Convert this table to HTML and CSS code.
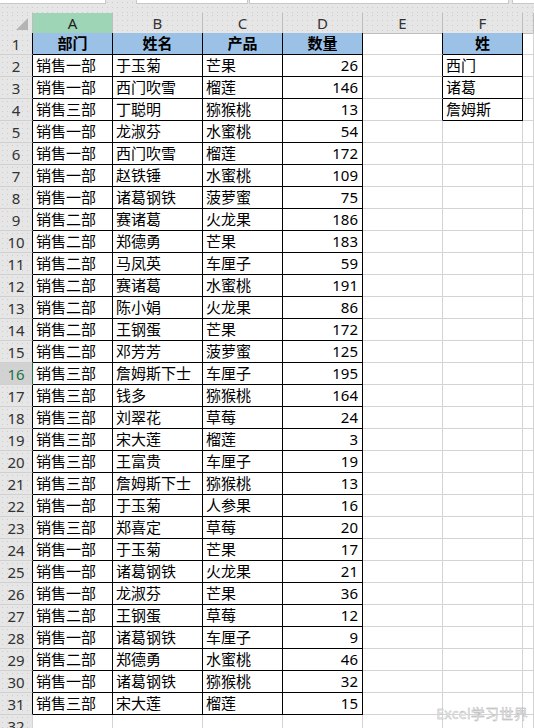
FILE: index.html
```html
<!DOCTYPE html>
<html lang="zh">
<head>
<meta charset="utf-8">
<title>Sheet</title>
<link rel="stylesheet" href="styles.css">
</head>
<body>
<div class="sheet">
  <div class="topbar">
    <div class="box b1"></div>
    <div class="box b2"></div>
    <div class="box b3"></div>
    <div class="box b4"></div>
  </div>

  <div class="row colhead">
    <div class="corner"><span class="tri"></span></div>
    <div class="ch sel tb">A</div>
    <div class="ch tb">B</div>
    <div class="ch tb">C</div>
    <div class="ch tb">D</div>
    <div class="ch">E</div>
    <div class="ch tb">F</div>
    <div class="ch"></div>
  </div>

  <div class="row"><div class="rh">1</div><div class="c tb h">部门</div><div class="c tb h">姓名</div><div class="c tb h">产品</div><div class="c tb h">数量</div><div class="c rb"></div><div class="c tb h">姓</div><div class="c"></div></div>
  <div class="row"><div class="rh">2</div><div class="c tb">销售一部</div><div class="c tb">于玉菊</div><div class="c tb">芒果</div><div class="c tb n">26</div><div class="c rb"></div><div class="c tb">西门</div><div class="c"></div></div>
  <div class="row"><div class="rh">3</div><div class="c tb">销售一部</div><div class="c tb">西门吹雪</div><div class="c tb">榴莲</div><div class="c tb n">146</div><div class="c rb"></div><div class="c tb">诸葛</div><div class="c"></div></div>
  <div class="row"><div class="rh">4</div><div class="c tb">销售三部</div><div class="c tb">丁聪明</div><div class="c tb">猕猴桃</div><div class="c tb n">13</div><div class="c rb"></div><div class="c tb">詹姆斯</div><div class="c"></div></div>
  <div class="row"><div class="rh">5</div><div class="c tb">销售一部</div><div class="c tb">龙淑芬</div><div class="c tb">水蜜桃</div><div class="c tb n">54</div><div class="c"></div><div class="c"></div><div class="c"></div></div>
  <div class="row"><div class="rh">6</div><div class="c tb">销售一部</div><div class="c tb">西门吹雪</div><div class="c tb">榴莲</div><div class="c tb n">172</div><div class="c"></div><div class="c"></div><div class="c"></div></div>
  <div class="row"><div class="rh">7</div><div class="c tb">销售一部</div><div class="c tb">赵铁锤</div><div class="c tb">水蜜桃</div><div class="c tb n">109</div><div class="c"></div><div class="c"></div><div class="c"></div></div>
  <div class="row"><div class="rh">8</div><div class="c tb">销售一部</div><div class="c tb">诸葛钢铁</div><div class="c tb">菠萝蜜</div><div class="c tb n">75</div><div class="c"></div><div class="c"></div><div class="c"></div></div>
  <div class="row"><div class="rh">9</div><div class="c tb">销售二部</div><div class="c tb">赛诸葛</div><div class="c tb">火龙果</div><div class="c tb n">186</div><div class="c"></div><div class="c"></div><div class="c"></div></div>
  <div class="row"><div class="rh">10</div><div class="c tb">销售二部</div><div class="c tb">郑德勇</div><div class="c tb">芒果</div><div class="c tb n">183</div><div class="c"></div><div class="c"></div><div class="c"></div></div>
  <div class="row"><div class="rh">11</div><div class="c tb">销售二部</div><div class="c tb">马凤英</div><div class="c tb">车厘子</div><div class="c tb n">59</div><div class="c"></div><div class="c"></div><div class="c"></div></div>
  <div class="row"><div class="rh">12</div><div class="c tb">销售二部</div><div class="c tb">赛诸葛</div><div class="c tb">水蜜桃</div><div class="c tb n">191</div><div class="c"></div><div class="c"></div><div class="c"></div></div>
  <div class="row"><div class="rh">13</div><div class="c tb">销售二部</div><div class="c tb">陈小娟</div><div class="c tb">火龙果</div><div class="c tb n">86</div><div class="c"></div><div class="c"></div><div class="c"></div></div>
  <div class="row"><div class="rh">14</div><div class="c tb">销售二部</div><div class="c tb">王钢蛋</div><div class="c tb">芒果</div><div class="c tb n">172</div><div class="c"></div><div class="c"></div><div class="c"></div></div>
  <div class="row"><div class="rh">15</div><div class="c tb">销售二部</div><div class="c tb">邓芳芳</div><div class="c tb">菠萝蜜</div><div class="c tb n">125</div><div class="c"></div><div class="c"></div><div class="c"></div></div>
  <div class="row"><div class="rh act">16</div><div class="c tb">销售三部</div><div class="c tb">詹姆斯下士</div><div class="c tb">车厘子</div><div class="c tb n">195</div><div class="c"></div><div class="c"></div><div class="c"></div></div>
  <div class="row"><div class="rh">17</div><div class="c tb">销售三部</div><div class="c tb">钱多</div><div class="c tb">猕猴桃</div><div class="c tb n">164</div><div class="c"></div><div class="c"></div><div class="c"></div></div>
  <div class="row"><div class="rh">18</div><div class="c tb">销售三部</div><div class="c tb">刘翠花</div><div class="c tb">草莓</div><div class="c tb n">24</div><div class="c"></div><div class="c"></div><div class="c"></div></div>
  <div class="row"><div class="rh">19</div><div class="c tb">销售三部</div><div class="c tb">宋大莲</div><div class="c tb">榴莲</div><div class="c tb n">3</div><div class="c"></div><div class="c"></div><div class="c"></div></div>
  <div class="row"><div class="rh">20</div><div class="c tb">销售三部</div><div class="c tb">王富贵</div><div class="c tb">车厘子</div><div class="c tb n">19</div><div class="c"></div><div class="c"></div><div class="c"></div></div>
  <div class="row"><div class="rh">21</div><div class="c tb">销售三部</div><div class="c tb">詹姆斯下士</div><div class="c tb">猕猴桃</div><div class="c tb n">13</div><div class="c"></div><div class="c"></div><div class="c"></div></div>
  <div class="row"><div class="rh">22</div><div class="c tb">销售一部</div><div class="c tb">于玉菊</div><div class="c tb">人参果</div><div class="c tb n">16</div><div class="c"></div><div class="c"></div><div class="c"></div></div>
  <div class="row"><div class="rh">23</div><div class="c tb">销售三部</div><div class="c tb">郑喜定</div><div class="c tb">草莓</div><div class="c tb n">20</div><div class="c"></div><div class="c"></div><div class="c"></div></div>
  <div class="row"><div class="rh">24</div><div class="c tb">销售一部</div><div class="c tb">于玉菊</div><div class="c tb">芒果</div><div class="c tb n">17</div><div class="c"></div><div class="c"></div><div class="c"></div></div>
  <div class="row"><div class="rh">25</div><div class="c tb">销售一部</div><div class="c tb">诸葛钢铁</div><div class="c tb">火龙果</div><div class="c tb n">21</div><div class="c"></div><div class="c"></div><div class="c"></div></div>
  <div class="row"><div class="rh">26</div><div class="c tb">销售一部</div><div class="c tb">龙淑芬</div><div class="c tb">芒果</div><div class="c tb n">36</div><div class="c"></div><div class="c"></div><div class="c"></div></div>
  <div class="row"><div class="rh">27</div><div class="c tb">销售二部</div><div class="c tb">王钢蛋</div><div class="c tb">草莓</div><div class="c tb n">12</div><div class="c"></div><div class="c"></div><div class="c"></div></div>
  <div class="row"><div class="rh">28</div><div class="c tb">销售一部</div><div class="c tb">诸葛钢铁</div><div class="c tb">车厘子</div><div class="c tb n">9</div><div class="c"></div><div class="c"></div><div class="c"></div></div>
  <div class="row"><div class="rh">29</div><div class="c tb">销售二部</div><div class="c tb">郑德勇</div><div class="c tb">水蜜桃</div><div class="c tb n">46</div><div class="c"></div><div class="c"></div><div class="c"></div></div>
  <div class="row"><div class="rh">30</div><div class="c tb">销售一部</div><div class="c tb">诸葛钢铁</div><div class="c tb">猕猴桃</div><div class="c tb n">32</div><div class="c"></div><div class="c"></div><div class="c"></div></div>
  <div class="row"><div class="rh">31</div><div class="c tb">销售三部</div><div class="c tb">宋大莲</div><div class="c tb">榴莲</div><div class="c tb n">15</div><div class="c"></div><div class="c"></div><div class="c"></div></div>
  <div class="row"><div class="rh last">32</div><div class="c"></div><div class="c"></div><div class="c"></div><div class="c"></div><div class="c"></div><div class="c"></div><div class="c"></div></div>

  <div class="watermark">Excel学习世界</div>
</div>
</body>
</html>
```

FILE: styles.css
```css
* { box-sizing: border-box; }

html, body {
  margin: 0;
  padding: 0;
  background: #ffffff;
  overflow: hidden;
}

.sheet {
  position: relative;
  width: 534px;
  height: 728px;
  overflow: hidden;
  font-family: "Noto Sans", "Noto Sans CJK SC", sans-serif;
  font-size: 15px;
  color: #000;
}

.topbar {
  display: flex;
  height: 13px;
  background-color: #e6e6e6;
  background-image: radial-gradient(circle, #cdcdcd 0.7px, transparent 0.9px);
  background-size: 5px 5px;
}

.box {
  height: 4px;
  background: #ffffff;
  border: 1px solid #c8c8c8;
  border-top: none;
}
.b1 { width: 106px; border-left: none; }
.b2 { width: 112px; margin-left: 30px; }
.b3 { width: 260px; margin-left: 1px; }
.b4 { flex: 1; margin-left: 3px; border-right: none; }

.row {
  display: grid;
  grid-template-columns: 33px 80px 90px 80px 80px 80px 80px 1fr;
  height: 22px;
}

.colhead {
  height: 20px;
  background-color: #e6e6e6;
  background-image: radial-gradient(circle, #cdcdcd 0.7px, transparent 0.9px);
  background-size: 5px 5px;
}

.corner {
  display: flex;
  justify-content: flex-end;
  align-items: flex-end;
  padding: 0 4px 3px 0;
  border-right: 1px solid #bdbdbd;
  border-bottom: 1px solid #bdbdbd;
}
.tri {
  width: 0;
  height: 0;
  border-left: 12px solid transparent;
  border-bottom: 12px solid #b4b4b4;
}

.ch {
  display: flex;
  align-items: center;
  justify-content: center;
  font-family: "Noto Sans", sans-serif;
  font-size: 15px;
  color: #333;
  border-right: 1px solid #bdbdbd;
  border-bottom: 1px solid #bdbdbd;
}
.ch.sel {
  background: #9fd5b7;
  color: #1d1d1d;
}
.ch.tb { border-bottom-color: #000; }

.rh {
  display: flex;
  align-items: center;
  justify-content: center;
  font-family: "Noto Sans", sans-serif;
  font-size: 15px;
  color: #333;
  background-color: #e6e6e6;
  background-image: radial-gradient(circle, #cdcdcd 0.7px, transparent 0.9px);
  background-size: 5px 5px;
  border-right: 1px solid #000;
  border-bottom: 1px solid #d0d0d0;
}
.rh.act {
  background-color: #d2d2d2;
  color: #217346;
  border-right-color: #1e6b41;
}
.rh.last { border-right-color: #d4d4d4; }

.c {
  display: flex;
  align-items: center;
  padding: 0 3px 1px 3px;
  white-space: nowrap;
  overflow: hidden;
  line-height: 20px;
  border-right: 1px solid #d4d4d4;
  border-bottom: 1px solid #d4d4d4;
}
.c.tb { border-right-color: #000; border-bottom-color: #000; }
.c.rb { border-right-color: #000; }
.c.h {
  justify-content: center;
  font-weight: bold;
  background: #9bc2e6;
}
.c.n {
  justify-content: flex-end;
  padding-right: 4px;
}

.watermark {
  position: absolute;
  right: 6px;
  bottom: 5px;
  font-family: "Noto Sans", "Noto Sans CJK SC", sans-serif;
  font-size: 14px;
  letter-spacing: 0.3px;
  color: #f2f2f2;
  -webkit-text-stroke: 0.35px #a8a8a8;
}
```
